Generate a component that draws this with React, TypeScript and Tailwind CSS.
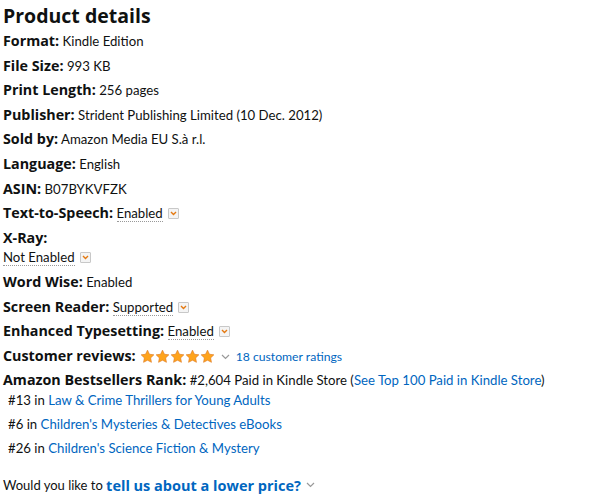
import React from 'react';

const Chevron = () => (
  <span className="inline-flex items-center justify-center w-[11px] h-[11px] ml-[5px] align-[2px] border border-[#c8c8c8] bg-[#f4f4f4] rounded-[1px]">
    <svg width="7" height="5" viewBox="0 0 7 5">
      <path d="M1 1l2.5 2.5L6 1" fill="none" stroke="#e47911" strokeWidth="1.4" />
    </svg>
  </span>
);

const Star = () => (
  <svg width="15" height="15" viewBox="0 0 24 24">
    <path
      d="M12 1.8l3.1 6.6 7.1.9-5.2 4.9 1.3 7.1L12 17.9l-6.3 3.4 1.3-7.1-5.2-4.9 7.1-.9z"
      fill="#ffa41c"
      stroke="#de7921"
      strokeWidth="1"
    />
  </svg>
);

const SmallCaret = () => (
  <svg width="9" height="6" viewBox="0 0 9 6" className="inline-block">
    <path d="M1 1l3.5 3.5L8 1" fill="none" stroke="#999" strokeWidth="1.2" />
  </svg>
);

const Dotted = ({ children }: { children: React.ReactNode }) => (
  <span className="border-b border-dotted border-[#999]">{children}</span>
);

const Label = ({ children }: { children: React.ReactNode }) => (
  <span
    className="font-bold text-[14.3px] leading-none"
    style={{ fontFamily: '"Open Sans", Arial, sans-serif' }}
  >
    {children}
  </span>
);

const Row = ({ label, children }: { label: string; children?: React.ReactNode }) => (
  <li className="mb-[5px] h-[19.6px]">
    <Label>{label}:</Label> {children}
  </li>
);

export default function App() {
  return (
    <div
      className="w-[600px] h-[504px] bg-white text-[#0f1111] text-[13.2px] leading-[19.6px] px-[3px] pt-[3px]"
      style={{ fontFamily: 'Lato, Arial, sans-serif' }}
    >
      <h2
        className="text-[19.5px] leading-[26px] font-bold mb-[3px]"
        style={{ fontFamily: '"Open Sans", Arial, sans-serif' }}
      >
        Product details
      </h2>
      <ul className="list-none">
        <Row label="Format">Kindle Edition</Row>
        <Row label="File Size">993 KB</Row>
        <Row label="Print Length">256 pages</Row>
        <Row label="Publisher">Strident Publishing Limited (10 Dec. 2012)</Row>
        <Row label="Sold by">Amazon Media EU S.à r.l.</Row>
        <Row label="Language">English</Row>
        <Row label="ASIN">B07BYKVFZK</Row>
        <Row label="Text-to-Speech">
          <Dotted>Enabled</Dotted>
          <Chevron />
        </Row>
        <li className="mb-[5px]">
          <div className="h-[19.6px]">
            <Label>X-Ray:</Label>
          </div>
          <div className="h-[19.6px]">
            <Dotted>Not Enabled</Dotted>
            <Chevron />
          </div>
        </li>
        <Row label="Word Wise">Enabled</Row>
        <Row label="Screen Reader">
          <Dotted>Supported</Dotted>
          <Chevron />
        </Row>
        <Row label="Enhanced Typesetting">
          <Dotted>Enabled</Dotted>
          <Chevron />
        </Row>
        <li className="mb-[5px] h-[19.6px] flex items-center">
          <span className="mr-[4px]">
            <Label>Customer reviews:</Label>
          </span>
          <span className="inline-flex items-center">
            <Star />
            <Star />
            <Star />
            <Star />
            <Star />
          </span>
          <span className="ml-[6px] mr-[6px] flex items-center">
            <SmallCaret />
          </span>
          <span className="text-[#0066c0] text-[12.2px]">18 customer ratings</span>
        </li>
        <li>
          <div className="h-[19.6px]">
            <Label>Amazon Bestsellers Rank:</Label> #2,604 Paid in Kindle Store (
            <span className="text-[#0066c0]">See Top 100 Paid in Kindle Store</span>)
          </div>
          <ul className="list-none pl-[5px]">
            <li className="mb-[4.5px]">
              #13 in <span className="text-[#0066c0]">Law &amp; Crime Thrillers for Young Adults</span>
            </li>
            <li className="mb-[4.5px]">
              #6 in <span className="text-[#0066c0]">Children&apos;s Mysteries &amp; Detectives eBooks</span>
            </li>
            <li className="mb-[4.5px]">
              #26 in <span className="text-[#0066c0]">Children&apos;s Science Fiction &amp; Mystery</span>
            </li>
          </ul>
        </li>
      </ul>
      <div className="mt-[17px] flex items-center">
        <span className="text-[13px]">Would you like to&nbsp;</span>
        <span
          className="text-[#0066c0] font-bold text-[14.5px]"
          style={{ fontFamily: '"Open Sans", Arial, sans-serif' }}
        >
          tell us about a lower price?
        </span>
        <span className="ml-[5px] flex items-center">
          <SmallCaret />
        </span>
      </div>
    </div>
  );
}
